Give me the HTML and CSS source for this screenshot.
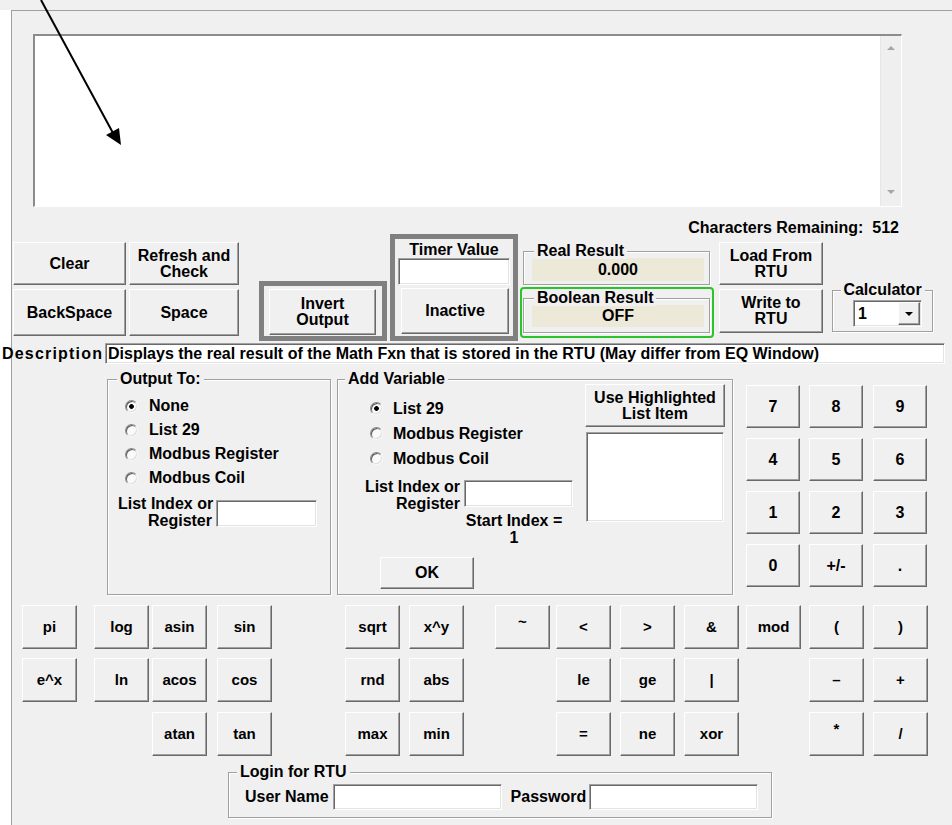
FILE: index.html
```html
<!DOCTYPE html>
<html>
<head>
<meta charset="utf-8">
<title>Math Function Editor</title>
<link rel="stylesheet" href="styles.css">
</head>
<body>
<div class="topstrip"></div>
<div class="dialog">
  <div class="memo">
    <div class="memo-scroll"><span class="arr up"></span><span class="arr down"></span></div>
  </div>
  <div class="chars">Characters Remaining:&nbsp; 512</div>

  <div class="row-a">
    <div class="col col1">
      <button class="btn h43">Clear</button>
      <button class="btn h47">BackSpace</button>
    </div>
    <div class="col col2">
      <button class="btn h43">Refresh and<br>Check</button>
      <button class="btn h47">Space</button>
    </div>
    <div class="frame invert">
      <button class="btn invert-btn">Invert<br>Output</button>
    </div>
    <div class="frame timer">
      <div class="timer-label">Timer Value</div>
      <div class="field timer-field"></div>
      <button class="btn timer-btn">Inactive</button>
    </div>
    <div class="results">
      <div class="group real">
        <span class="glabel gl10">Real Result</span>
        <div class="value v23">0.000</div>
      </div>
      <div class="green">
        <div class="group bool">
          <span class="glabel gl10">Boolean Result</span>
          <div class="value v22">OFF</div>
        </div>
      </div>
    </div>
    <div class="col col-rtu">
      <button class="btn h43">Load From<br>RTU</button>
      <button class="btn h44">Write to<br>RTU</button>
    </div>
    <div class="group calc">
      <span class="glabel glc">Calculator</span>
      <div class="field combo">
        <span>1</span>
        <span class="btn drop"><svg width="8" height="4" viewBox="0 0 8 4"><path d="M0 0H8L4 4Z" fill="#000"/></svg></span>
      </div>
    </div>
  </div>

  <div class="desc-row">
    <span class="desc-label">Description</span>
    <div class="field desc-field">Displays the real result of the Math Fxn that is stored in the RTU (May differ from EQ Window)</div>
  </div>

  <div class="row-mid">
    <div class="group output">
      <span class="glabel gl9">Output To:</span>
      <div class="radios r-out">
        <div class="radio-row"><span class="radio on"></span>None</div>
        <div class="radio-row"><span class="radio"></span>List 29</div>
        <div class="radio-row"><span class="radio"></span>Modbus Register</div>
        <div class="radio-row"><span class="radio"></span>Modbus Coil</div>
      </div>
      <div class="list-index li-out">
        <div class="li-label">List Index or<br>Register</div>
        <div class="field li-field"></div>
      </div>
    </div>

    <div class="group addvar">
      <span class="glabel gl7">Add Variable</span>
      <div class="av-left">
        <div class="radios r-add">
          <div class="radio-row"><span class="radio on"></span>List 29</div>
          <div class="radio-row"><span class="radio"></span>Modbus Register</div>
          <div class="radio-row"><span class="radio"></span>Modbus Coil</div>
        </div>
        <div class="list-index li-add">
          <div class="li-label">List Index or<br>Register</div>
          <div class="field li-field"></div>
        </div>
        <div class="start-index">Start Index =<br>1</div>
        <button class="btn ok-btn">OK</button>
      </div>
      <div class="av-right">
        <button class="btn use-btn">Use Highlighted<br>List Item</button>
        <div class="field listbox"></div>
      </div>
    </div>

    <div class="numpad">
      <button class="btn">7</button><button class="btn">8</button><button class="btn">9</button>
      <button class="btn">4</button><button class="btn">5</button><button class="btn">6</button>
      <button class="btn">1</button><button class="btn">2</button><button class="btn">3</button>
      <button class="btn">0</button><button class="btn">+/-</button><button class="btn">.</button>
    </div>
  </div>

  <div class="calcgrid">
    <button class="btn">pi</button><button class="btn">log</button><button class="btn">asin</button><button class="btn">sin</button>
    <button class="btn">sqrt</button><button class="btn">x^y</button><button class="btn sup">~</button><button class="btn">&lt;</button>
    <button class="btn">&gt;</button><button class="btn">&amp;</button><button class="btn">mod</button><button class="btn">(</button><button class="btn">)</button>

    <button class="btn">e^x</button><button class="btn">ln</button><button class="btn">acos</button><button class="btn">cos</button>
    <button class="btn">rnd</button><button class="btn">abs</button><span class="gap"></span><button class="btn">le</button>
    <button class="btn">ge</button><button class="btn">|</button><span class="gap"></span><button class="btn">–</button><button class="btn">+</button>

    <span class="gap"></span><span class="gap"></span><button class="btn">atan</button><button class="btn">tan</button>
    <button class="btn">max</button><button class="btn">min</button><span class="gap"></span><button class="btn">=</button>
    <button class="btn">ne</button><button class="btn">xor</button><span class="gap"></span><button class="btn sup">*</button><button class="btn">/</button>
  </div>

  <div class="group login">
    <span class="glabel gl8">Login for RTU</span>
    <span class="login-l1">User Name</span>
    <div class="field login-f1"></div>
    <span class="login-l2">Password</span>
    <div class="field login-f2"></div>
  </div>
</div>

<svg class="annot" width="952" height="825" viewBox="0 0 952 825">
  <line x1="41" y1="0" x2="113" y2="133" stroke="#000" stroke-width="2"/>
  <polygon points="106,135 119,128 121,145" fill="#000"/>
</svg>
</body>
</html>
```

FILE: styles.css
```css
* { box-sizing: border-box; }
html, body { margin: 0; padding: 0; }
body {
  background: #fff;
  font: bold 16px/16px "Liberation Sans", Arial, sans-serif;
  color: #000;
  width: 952px;
  height: 825px;
  overflow: hidden;
  position: relative;
}
.topstrip { height: 10px; background: #f0f0f0; }
.dialog {
  margin-left: 11px;
  height: 815px;
  background: #f0f0f0;
  border-top: 1px solid #a0a0a0;
  border-left: 1px solid #a0a0a0;
}

/* generic controls */
.btn {
  display: block;
  font: inherit;
  line-height: 16px;
  color: #000;
  background: #f0f0f0;
  padding: 0;
  margin: 0;
  text-align: center;
  border: 1px solid;
  border-color: #fff #696969 #696969 #fff;
  box-shadow: inset -1px -1px 0 #a0a0a0;
}
.field {
  background: #fff;
  border: 1px solid;
  border-color: #a0a0a0 #fff #fff #a0a0a0;
  box-shadow: inset 1px 1px 0 #696969, inset -1px -1px 0 #e3e3e3;
}
.group {
  position: relative;
  border: 1px solid #a0a0a0;
  box-shadow: 1px 1px 0 #fff, inset 1px 1px 0 #fff;
}
.glabel {
  position: absolute;
  top: -9px;
  background: #f0f0f0;
  padding: 0 3px;
  line-height: 16px;
  white-space: nowrap;
}
.gl7 { left: 7px; }
.gl8 { left: 8px; }
.gl9 { left: 9px; }
.gl10 { left: 10px; }
.glc { left: 50%; transform: translateX(-50%); }

/* memo */
.memo {
  margin: 23px 0 0 21px;
  width: 869px;
  height: 173px;
  background: #fff;
  border-style: solid;
  border-width: 2px 1px 1px 2px;
  border-color: #8c8c8c #fff #fff #8c8c8c;
  display: flex;
  justify-content: flex-end;
}
.memo-scroll {
  width: 21px;
  background: #efefef;
  border-left: 1px solid #e6e6e6;
  display: flex;
  flex-direction: column;
  justify-content: space-between;
  align-items: center;
  padding: 10px 0 12px;
}
.arr { width: 0; height: 0; border-left: 4px solid transparent; border-right: 4px solid transparent; }
.arr.up { border-bottom: 4px solid #a6a6a6; }
.arr.down { border-top: 4px solid #a6a6a6; }

.chars {
  margin-top: 14px;
  height: 13px;
  line-height: 14px;
  width: 887px;
  text-align: right;
  white-space: pre;
}

/* row a */
.row-a { display: flex; align-items: flex-start; height: 107px; }
.col { display: flex; flex-direction: column; gap: 4px; margin-top: 8px; }
.col .btn { width: 100%; }
.col1 { margin-left: 1px; width: 113px; }
.col2 { margin-left: 3px; width: 110px; }
.col-rtu { margin-left: 5px; width: 104px; }
.h43 { height: 43px; }
.h44 { height: 44px; }
.h47 { height: 47px; }

.frame { border: 5px solid #808080; }
.invert { margin: 47px 0 0 20px; width: 128px; height: 60px; padding: 3px 0 0 5px; }
.invert-btn { width: 107px; height: 46px; }
.timer { margin-left: 3px; width: 128px; height: 107px; }
.timer-label { margin-top: 3px; height: 16px; text-align: center; }
.timer-field { margin-left: 3px; width: 112px; height: 27px; }
.timer-btn { margin: 3px 0 0 6px; width: 108px; height: 46px; }

.results { margin: 17px 0 0 2px; width: 194px; }
.real { margin-left: 3px; width: 187px; height: 34px; padding: 6px 0 0 8px; }
.value { width: 172px; background: #ece9d8; text-align: center; }
.v23 { height: 23px; line-height: 23px; }
.v22 { height: 22px; line-height: 22px; }
.green {
  margin-top: 2px;
  width: 194px;
  height: 51px;
  border: 2px solid #2bc42b;
  border-radius: 4px;
  padding: 9px 0 0 1px;
}
.bool { width: 187px; height: 35px; padding: 6px 0 0 8px; }

.calc { margin: 56px 0 0 9px; width: 101px; height: 42px; padding: 9px 0 0 20px; }
.combo {
  width: 69px;
  height: 27px;
  display: flex;
  align-items: center;
  justify-content: space-between;
  padding: 0 1px 0 4px;
  line-height: 16px;
}
.drop {
  width: 22px;
  height: 23px;
  display: flex;
  align-items: center;
  justify-content: center;
}

/* description */
.desc-row { display: flex; align-items: center; margin-top: 2px; height: 21px; }
.desc-label { margin-left: -10px; width: 103px; letter-spacing: 1.2px; white-space: nowrap; }
.desc-field {
  width: 840px;
  height: 21px;
  line-height: 19px;
  padding-left: 2px;
  white-space: nowrap;
  overflow: hidden;
}

/* middle */
.row-mid { display: flex; align-items: flex-start; margin-top: 15px; }
.output { margin-left: 95px; width: 224px; height: 216px; }
.addvar { margin-left: 6px; width: 396px; height: 216px; display: flex; }

.radio-row { display: flex; align-items: center; white-space: nowrap; }
.radio {
  width: 13px;
  height: 13px;
  border-radius: 50%;
  border: 1px solid;
  border-color: #8a8a8a #f8f8f8 #f8f8f8 #8a8a8a;
  box-shadow: inset 1px 1px 0 #5a5a5a, inset -1px -1px 0 #dcdcdc;
  background: #fafafa;
  flex: none;
}
.radio.on { background: radial-gradient(circle at 50% 50%, #000 0, #000 2px, #fafafa 2.7px); }
.r-out { margin-top: 14px; }
.r-out .radio-row { height: 24px; padding-left: 17px; gap: 11px; }
.r-add { margin-top: 16px; }
.r-add .radio-row { height: 25px; padding-left: 32px; gap: 10px; }

.list-index { display: flex; align-items: flex-start; }
.li-label { text-align: right; line-height: 17px; white-space: nowrap; }
.li-out { margin-top: 5px; }
.li-out .li-label { margin-left: 10px; width: 94px; }
.li-out .li-field { margin: 5px 0 0 4px; width: 101px; height: 27px; }
.li-add { margin-top: 7px; }
.li-add .li-label { width: 122px; }
.li-add .li-field { margin: 2px 0 0 4px; width: 109px; height: 27px; }

.av-left { width: 247px; }
.start-index { margin-left: 121px; width: 110px; text-align: center; line-height: 17px; }
.ok-btn { margin: 11px 0 0 42px; width: 94px; height: 32px; }
.av-right { margin-top: 4px; }
.use-btn { width: 140px; height: 43px; }
.listbox { margin: 5px 0 0 1px; width: 138px; height: 90px; }

.numpad {
  margin: 6px 0 0 13px;
  display: grid;
  grid-template-columns: 63px 64px 55px;
  grid-auto-rows: 43px;
  row-gap: 10px;
}
.numpad .btn { width: 54px; height: 43px; }

/* calc grid */
.calcgrid {
  margin: 10px 0 0 10px;
  display: grid;
  grid-template-columns: 72px 58px 65px 128px 64px 86px 61px 64px 64px 62px 63px 64px 55px;
  grid-template-rows: 53px 54px 44px;
}
.calcgrid .btn { width: 55px; height: 44px; font-size: 15px; }
.calcgrid .sup { padding-bottom: 10px; }

/* login */
.login {
  margin: 16px 0 0 216px;
  width: 544px;
  height: 46px;
  display: flex;
  align-items: flex-start;
  padding-top: 11px;
}
.login-l1 { margin-left: 16px; line-height: 26px; white-space: nowrap; }
.login-f1 { margin-left: 4px; width: 169px; height: 26px; }
.login-l2 { margin-left: 9px; line-height: 26px; white-space: nowrap; }
.login-f2 { margin-left: 3px; width: 169px; height: 26px; }

.annot { position: absolute; top: 0; left: 0; pointer-events: none; }
```
